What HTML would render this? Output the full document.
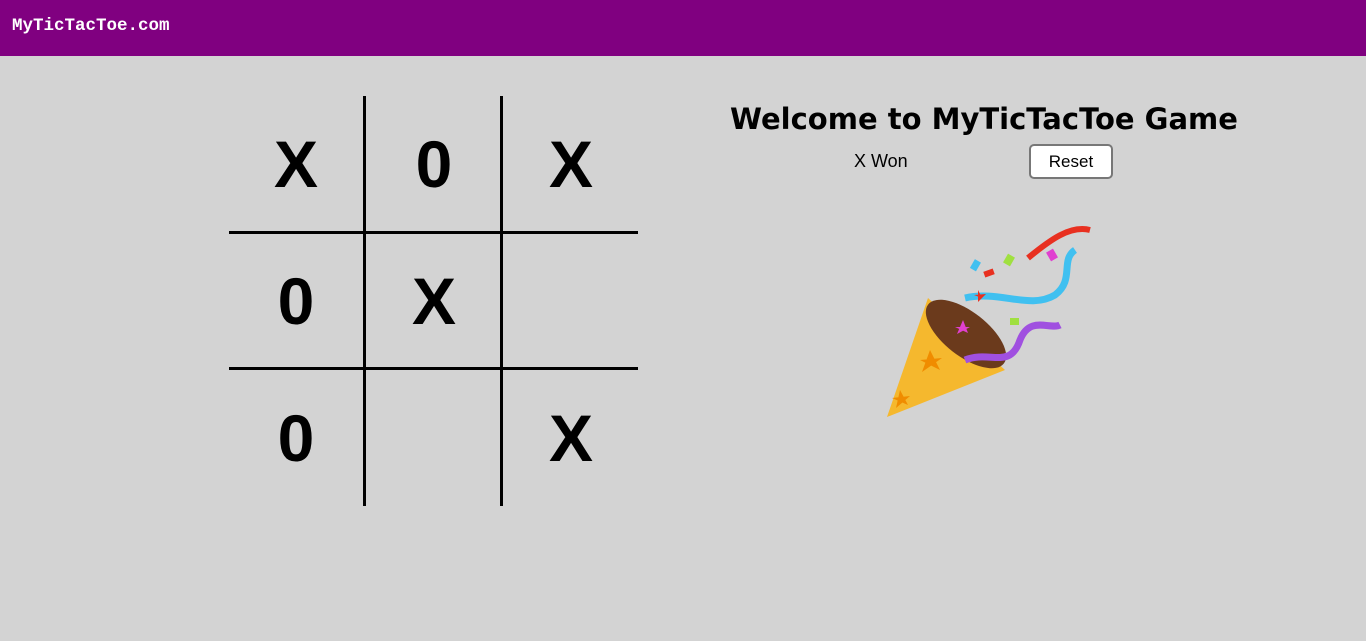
<!DOCTYPE html>
<html><head><style>
body{margin:0;width:1366px;height:641px;background:#d3d3d3;font-family:"Liberation Sans",sans-serif;overflow:hidden;position:relative}
.hdr{position:absolute;left:0;top:0;width:1366px;height:56px;background:#800080}
.hdr span{position:absolute;left:12px;top:16px;color:#fff;font:bold 17.5px "Liberation Mono",monospace}
.v{position:absolute;background:#000;width:3px;top:96px;height:410px}
.h{position:absolute;background:#000;height:3px;left:229px;width:409px}
.c{position:absolute;width:136px;height:136px;text-align:center;font:bold 66px "Liberation Sans",sans-serif;line-height:136px;color:#000}
.t{position:absolute;left:700px;width:568px;top:102px;text-align:center;font:bold 29px "DejaVu Sans",sans-serif;letter-spacing:0px}
.w{position:absolute;left:854px;top:151px;font-size:18px}
.b{position:absolute;left:1029px;top:144px;width:80px;height:31px;border:2px solid #777;border-radius:5px;background:#fff;font-size:17px;text-align:center;line-height:31px}
</style></head><body>
<div class="hdr"><span>MyTicTacToe.com</span></div>
<div class="v" style="left:363px"></div><div class="v" style="left:500px"></div>
<div class="h" style="top:231px"></div><div class="h" style="top:367px"></div>
<div class="c" style="left:228px;top:96px">X</div>
<div class="c" style="left:366px;top:96px">0</div>
<div class="c" style="left:503px;top:96px">X</div>
<div class="c" style="left:228px;top:233px">0</div>
<div class="c" style="left:366px;top:233px">X</div>
<div class="c" style="left:228px;top:370px">0</div>
<div class="c" style="left:503px;top:370px">X</div>
<div class="t">Welcome to MyTicTacToe Game</div>
<div class="w">X Won</div>
<div class="b">Reset</div>
<svg style="position:absolute;left:860px;top:210px" width="260" height="220" viewBox="0 0 260 220">
<polygon points="27,207 68,88 145,160" fill="#f5b82e"/>
<ellipse cx="106" cy="124" rx="48" ry="22" transform="rotate(38 106 124)" fill="#6b3a1c"/>
<polygon points="103,110 108,123 95,117 110,117 97,124" fill="#e040d0"/>
<polygon points="70,140 80,160 60,150 82,148 62,162" fill="#f08c00"/>
<polygon points="40,180 48,195 32,188 50,186 36,198" fill="#f08c00"/>
<path d="M105,150 C130,140 150,160 160,130 C170,105 190,120 200,115" stroke="#a050e0" stroke-width="7" fill="none"/>
<path d="M105,88 C140,80 170,100 195,85 C215,70 200,50 215,40" stroke="#40c0f0" stroke-width="7" fill="none"/>
<path d="M168,48 C190,30 210,15 230,20" stroke="#e83020" stroke-width="6" fill="none"/>
<polygon points="118,80 122,88 114,85 126,84 118,92" fill="#e83020"/>
<rect x="112" y="50" width="7" height="10" fill="#40c0f0" transform="rotate(30 115 55)"/>
<rect x="124" y="60" width="10" height="6" fill="#e83020" transform="rotate(-20 129 63)"/>
<rect x="145" y="45" width="8" height="10" fill="#a0e040" transform="rotate(30 149 50)"/>
<rect x="150" y="108" width="9" height="7" fill="#a0e040"/>
<rect x="188" y="40" width="8" height="10" fill="#e040d0" transform="rotate(-30 192 45)"/>
</svg>
</body></html>
